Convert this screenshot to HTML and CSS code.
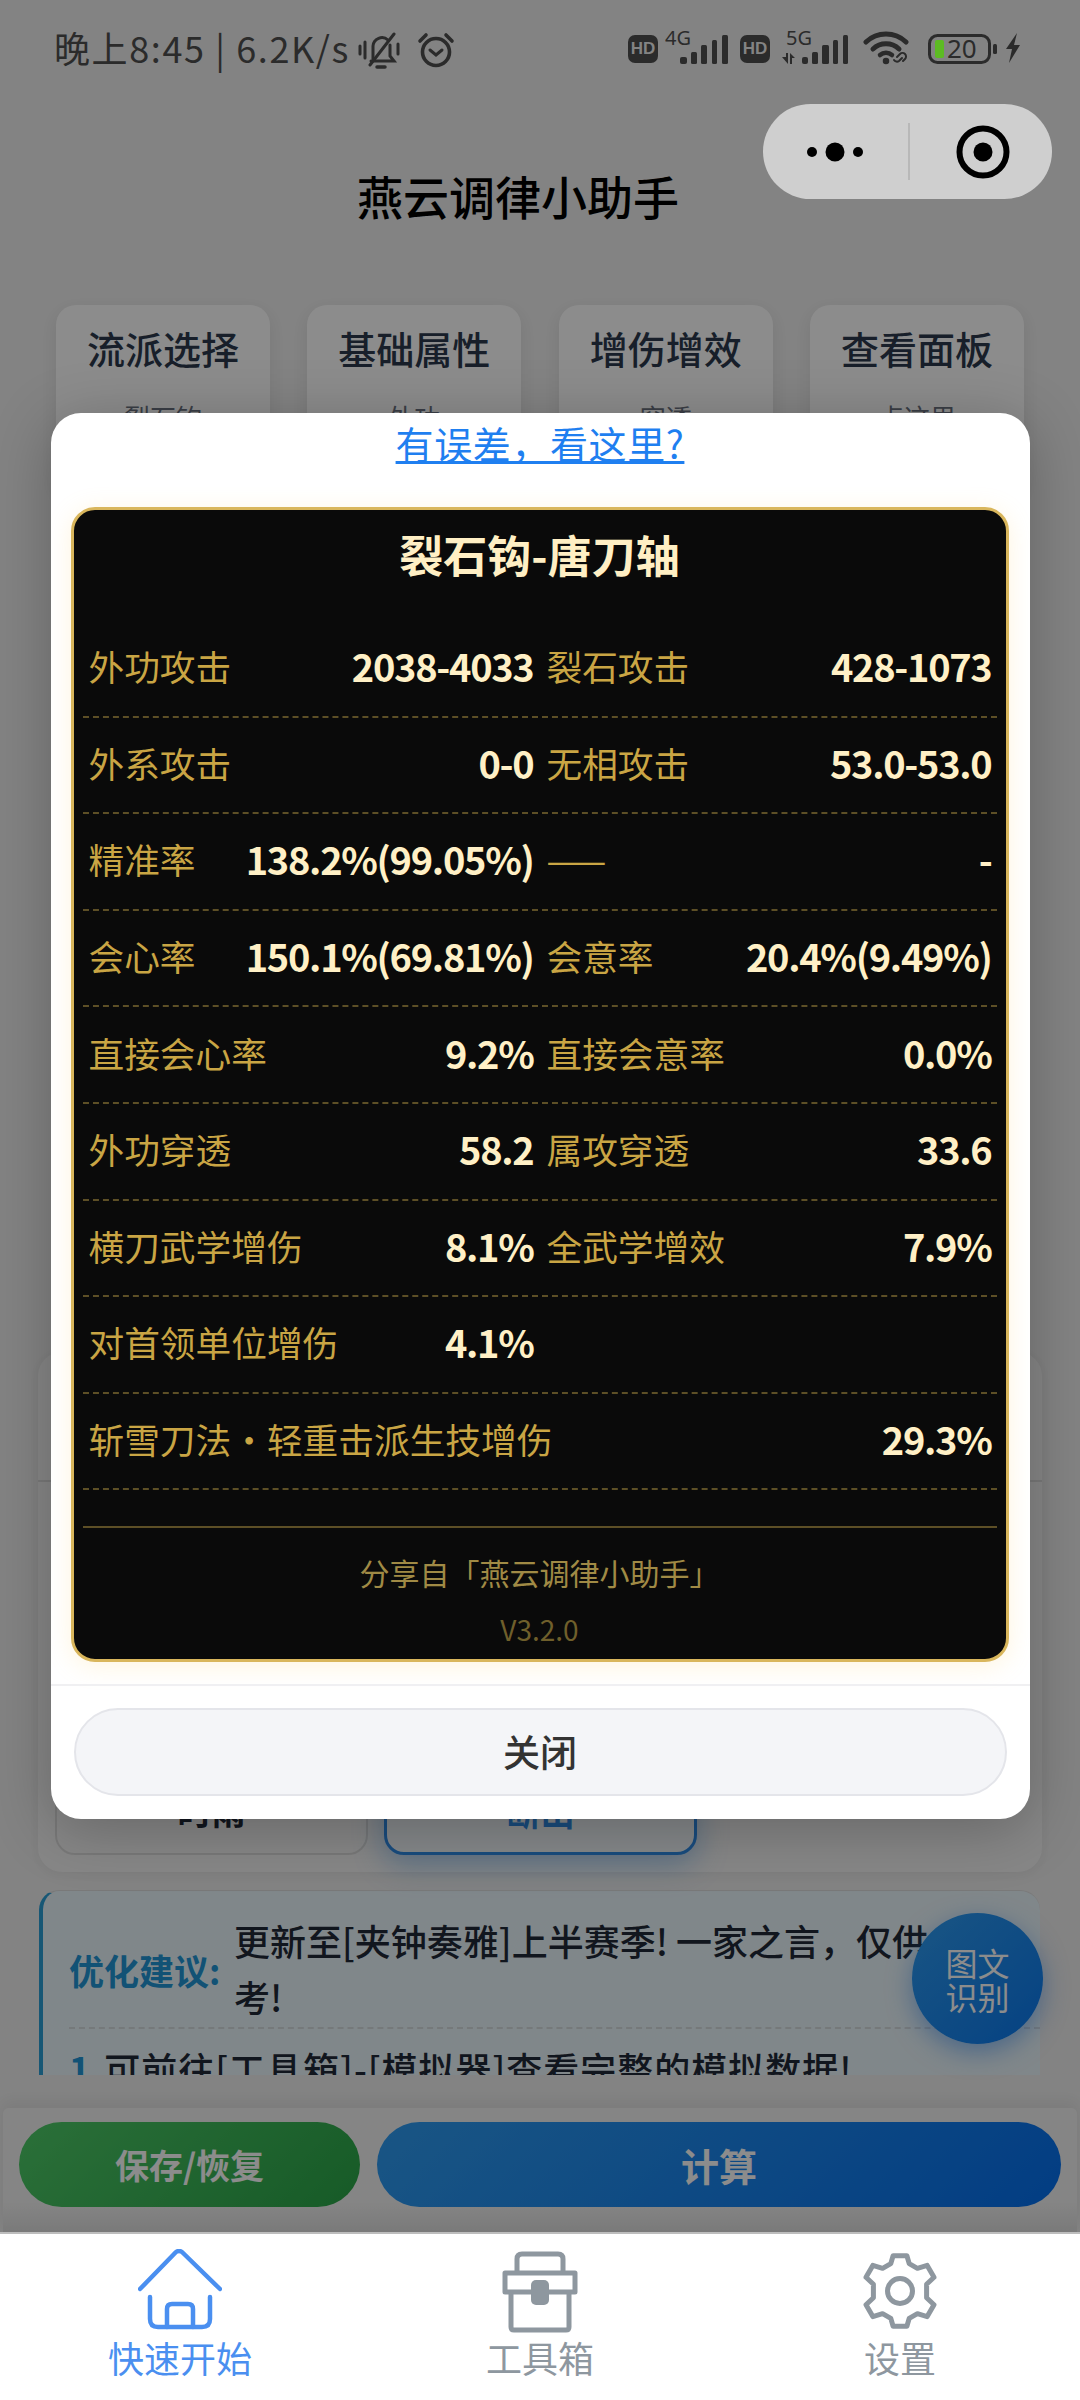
FILE: index.html
```html
<!DOCTYPE html>
<html lang="zh-CN">
<head>
<meta charset="utf-8">
<title>燕云调律小助手</title>
<link rel="stylesheet" href="styles.css">
</head>
<body>
<div class="screen">
  <div class="page">
    <div class="status">
      <div class="status-left">
        <span class="status-text">晚上8:45 | 6.2K/s</span>
        <svg class="ic-bell" viewBox="0 0 44 38" width="44" height="38"><g fill="none" stroke="#2b2b2b" stroke-width="3" stroke-linecap="round"><path d="M2 14v8M7 10v16"/><path d="M15 27V14a9 9 0 0 1 15-6"/><path d="M32 13v11l4 5H13"/><path d="M19 35h8" stroke-width="3.5"/><path d="M36 2 12 33"/><path d="M40 12v10"/></g></svg>
        <svg class="ic-alarm" viewBox="0 0 38 36" width="38" height="36"><g fill="none" stroke="#2b2b2b" stroke-width="3.6" stroke-linecap="round"><circle cx="19" cy="20" r="13.5"/><path d="M3 9l6-6M35 9l-6-6"/><path d="M13 18l6 5 6-5" stroke-width="3"/></g></svg>
      </div>
      <div class="status-right">
        <span class="hd">HD</span>
        <svg class="ic-sig4" viewBox="0 0 63 36" width="63" height="36"><text x="0" y="15" class="sig-text">4G</text><g fill="#2b2b2b"><rect x="15" y="27" width="7" height="7" rx="2"/><rect x="26" y="22" width="6" height="12" rx="1.5"/><rect x="36" y="15" width="6" height="19" rx="1.5"/><rect x="47" y="10" width="5" height="24" rx="1.5"/><rect x="57" y="5" width="6" height="29" rx="1.5"/></g></svg>
        <span class="hd">HD</span>
        <svg class="ic-sig5" viewBox="0 0 66 36" width="66" height="36"><text x="4" y="15" class="sig-text">5G</text><g fill="#2b2b2b"><path d="M0 27h4v-4h2v11zM8 34V23l5 5h-3v6z"/><rect x="20" y="27" width="6" height="7" rx="2"/><rect x="30" y="22" width="6" height="12" rx="1.5"/><rect x="40" y="15" width="7" height="19" rx="1.5"/><rect x="51" y="10" width="5" height="24" rx="1.5"/><rect x="61" y="5" width="5" height="29" rx="1.5"/></g></svg>
        <svg class="ic-wifi" viewBox="0 0 50 36" width="50" height="36"><g fill="none" stroke="#2b2b2b" stroke-linecap="round"><path d="M3 12a29 29 0 0 1 40 0" stroke-width="5"/><path d="M10 19a19 19 0 0 1 26 0" stroke-width="5"/><path d="M17 25a9 9 0 0 1 12 0" stroke-width="4.5"/><circle cx="23" cy="31" r="2.5" fill="#2b2b2b" stroke-width="1.5"/><path d="M34 27l3-3a3.500 3.500 0 0 1 5 5l-2 2M39 28l-3 3a3.500 3.500 0 0 1-5-1" stroke-width="2"/></g></svg>
        <svg class="ic-batt" viewBox="0 0 70 30" width="70" height="30"><rect x="1.500" y="1.500" width="60" height="27" rx="8" fill="none" stroke="#2b2b2b" stroke-width="3"/><rect x="7" y="6" width="9" height="18" rx="2" fill="#5dbb23"/><text x="19" y="24" class="batt-text">20</text><rect x="65" y="10" width="4" height="10" rx="1.500" fill="#2b2b2b"/></svg>
        <svg class="ic-bolt" viewBox="0 0 16 30" width="16" height="30"><path d="M12 0 1 16h6L4 30l11-18H9z" fill="#2b2b2b"/></svg>
      </div>
    </div>

    <div class="main">
      <h1 class="app-title">燕云调律小助手</h1>
      <div class="tabs">
        <div class="tab"><div class="tab-name">流派选择</div><div class="tab-sub">裂石钧</div></div>
        <div class="tab"><div class="tab-name">基础属性</div><div class="tab-sub">外功</div></div>
        <div class="tab"><div class="tab-name">增伤增效</div><div class="tab-sub">穿透</div></div>
        <div class="tab"><div class="tab-name">查看面板</div><div class="tab-sub">点这里</div></div>
      </div>
      <div class="panel">
        <div class="panel-head"></div>
        <div class="panel-body">
          <div class="option">时雨</div>
          <div class="option is-active">断山</div>
        </div>
      </div>
      <div class="notice">
        <div class="notice-top">
          <div class="notice-label">优化建议:</div>
          <div class="notice-text">更新至[夹钟奏雅]上半赛季! 一家之言，仅供参考!</div>
        </div>
        <div class="notice-item"><span class="notice-num">1</span><span>可前往[工具箱]-[模拟器]查看完整的模拟数据!</span></div>
      </div>
    </div>

    <div class="actions">
      <div class="btn btn-save">保存/恢复</div>
      <div class="btn btn-calc">计算</div>
    </div>

    <div class="fab">图文<br>识别</div>

    <div class="overlay">
      <div class="modal">
        <a class="modal-link">有误差，看这里?</a>
        <div class="card">
          <div class="card-title">裂石钩-唐刀轴</div>
          <div class="rows">
            <div class="row"><div class="cell"><span class="k">外功攻击</span><span class="v">2038-4033</span></div><div class="cell"><span class="k">裂石攻击</span><span class="v">428-1073</span></div></div>
            <div class="row"><div class="cell"><span class="k">外系攻击</span><span class="v">0-0</span></div><div class="cell"><span class="k">无相攻击</span><span class="v">53.0-53.0</span></div></div>
            <div class="row"><div class="cell"><span class="k">精准率</span><span class="v">138.2%(99.05%)</span></div><div class="cell"><span class="k">——</span><span class="v">-</span></div></div>
            <div class="row"><div class="cell"><span class="k">会心率</span><span class="v">150.1%(69.81%)</span></div><div class="cell"><span class="k">会意率</span><span class="v">20.4%(9.49%)</span></div></div>
            <div class="row"><div class="cell"><span class="k">直接会心率</span><span class="v">9.2%</span></div><div class="cell"><span class="k">直接会意率</span><span class="v">0.0%</span></div></div>
            <div class="row"><div class="cell"><span class="k">外功穿透</span><span class="v">58.2</span></div><div class="cell"><span class="k">属攻穿透</span><span class="v">33.6</span></div></div>
            <div class="row"><div class="cell"><span class="k">横刀武学增伤</span><span class="v">8.1%</span></div><div class="cell"><span class="k">全武学增效</span><span class="v">7.9%</span></div></div>
            <div class="row"><div class="cell"><span class="k">对首领单位增伤</span><span class="v">4.1%</span></div><div class="cell"></div></div>
            <div class="row row-wide"><div class="cell"><span class="k">斩雪刀法・轻重击派生技增伤</span><span class="v">29.3%</span></div></div>
          </div>
          <div class="card-foot">
            <div class="share">分享自「燕云调律小助手」</div>
            <div class="version">V3.2.0</div>
          </div>
        </div>
        <div class="modal-foot"><div class="close-btn">关闭</div></div>
      </div>
    </div>

    <div class="capsule">
      <svg class="cap-dots" viewBox="0 0 56 20" width="56" height="20"><g fill="#000"><circle cx="5" cy="10" r="5"/><circle cx="28" cy="10" r="9.500"/><circle cx="51" cy="10" r="5"/></g></svg>
      <span class="cap-div"></span>
      <svg class="cap-target" viewBox="0 0 54 54" width="54" height="54"><circle cx="27" cy="27" r="23.500" fill="none" stroke="#000" stroke-width="6"/><circle cx="27" cy="27" r="9.500" fill="#000"/></svg>
    </div>
  </div>

  <nav class="tabbar">
    <div class="nav-item is-on">
      <svg class="nav-ic" viewBox="0 0 84 84" width="84" height="84"><g fill="none" stroke="#4a8ff0" stroke-width="4.500" stroke-linecap="round" stroke-linejoin="round"><path d="M2 40 38 3q3-2 6 0l38 37"/><path d="M12 48v22q0 8 8 8h44q8 0 8-8V48"/><path d="M29 78V60q0-5 5-5h16q5 0 5 5v18"/></g></svg>
      <span class="nav-label">快速开始</span>
    </div>
    <div class="nav-item">
      <svg class="nav-ic" viewBox="0 0 84 84" width="84" height="84"><g fill="none" stroke="#8e979f" stroke-width="5" stroke-linejoin="round"><path d="M19 24V10q0-5 5-5h36q5 0 5 5v14"/><path d="M7 24h70v19H7z"/><path d="M13 43v35q0 3 3 3h52q3 0 3-3V43"/></g><rect x="33" y="31" width="18" height="25" rx="5" fill="#8e979f"/></svg>
      <span class="nav-label">工具箱</span>
    </div>
    <div class="nav-item">
      <svg class="nav-ic" viewBox="0 0 84 84" width="84" height="84"><g fill="none" stroke="#8e979f" stroke-width="5" stroke-linejoin="round"><path d="M32.800 14.600 35.100 6.700H48.900L51.200 14.600 59.400 19.300 69.200 16.400 76 28.300 68.600 35.300V48.700L76 55.700 69.200 67.600 59.400 64.700 51.200 69.400 48.900 77.300H35.100L32.800 69.400 24.600 64.700 14.800 67.600 8 55.700 15.400 48.700V35.300L8 28.300 14.800 16.400 24.600 19.300z"/><circle cx="42" cy="42" r="12.500"/></g></svg>
      <span class="nav-label">设置</span>
    </div>
  </nav>
</div>
</body>
</html>
```
FILE: styles.css
```css
* { box-sizing: border-box; }
html, body { margin: 0; padding: 0; }
body { font-family: "Noto Sans CJK SC", "Noto Sans", sans-serif; background: #fff; }
.screen { width: 1080px; height: 2400px; display: flex; flex-direction: column; overflow: hidden; }
.page { position: relative; height: 2232px; background: #eee; flex: none; overflow: hidden; }

/* status bar */
.status { position: relative; z-index: 3; height: 100px; display: flex; justify-content: space-between; padding: 30px 59px 0 54px; color: #2b2b2b; }
.status-left, .status-right { display: flex; align-items: flex-start; }
.status-text { font-size: 36px; line-height: 40px; letter-spacing: 1.6px; margin-top: -3px; }
.ic-bell { margin-left: 8px; margin-top: 2px; }
.ic-alarm { margin-left: 15px; margin-top: 2px; }
.hd { width: 30px; height: 28px; margin-top: 5px; border-radius: 7px; background: #2b2b2b; color: #838383; font: 700 17px/28px "Liberation Sans", sans-serif; text-align: center; }
.ic-sig4 { margin-left: 7px; }
.ic-sig4 + .hd { margin-left: 12px; }
.ic-sig5 { margin-left: 12px; }
.sig-text { font: 400 20px "Noto Sans", sans-serif; fill: #2b2b2b; }
.batt-text { font: 400 26px "Noto Sans", sans-serif; fill: #2b2b2b; }
.ic-wifi { margin-left: 15px; }
.ic-batt { margin-left: 15px; margin-top: 4px; }
.ic-bolt { margin-left: 7px; margin-top: 3px; }

/* page content under the mask */
.main { height: 1975px; overflow: hidden; }
.app-title { margin: 0 44px 0 0; height: 196px; padding-bottom: 6px; display: flex; align-items: center; justify-content: center; font-size: 46px; font-weight: 500; color: #000; }
.tabs { margin: 9px 56px 0; display: flex; justify-content: space-between; }
.tab { width: 214px; height: 190px; border-radius: 20px; background: #fff; box-shadow: 0 6px 16px rgba(0,0,0,.08); text-align: center; padding-top: 16px; }
.tab-name { font-size: 38px; line-height: 54px; font-weight: 500; color: #2c3a4d; }
.tab-sub { margin-top: 24px; font-size: 26px; line-height: 36px; color: #6b7280; }
.panel { margin: 857px 38px 0; background: #f6f6f6; border-radius: 24px; box-shadow: 0 2px 10px rgba(0,0,0,.05); padding-bottom: 17px; }
.panel-head { height: 130px; border-bottom: 2px solid #ddd; }
.panel-body { margin-top: 263px; padding: 0 17px; display: flex; gap: 16px; }
.option { width: 313px; height: 110px; padding-top: 46px; border: 2px solid #ddd; border-radius: 20px; text-align: center; font-size: 34px; font-weight: 700; line-height: 36px; color: #1f2937; background: #f6f6f6; }
.option.is-active { border: 3px solid #2f8be6; color: #2f8be6; box-shadow: 0 10px 30px rgba(47,139,230,.4); background: #f2f7fc; }
.notice { margin: 18px 40px 0 39px; height: 320px; background: #eaf6fb; border-left: 4px solid #2a9fd6; border-radius: 20px 20px 0 0; padding: 20px 0 0 26px; border-top: 1px solid #ddd; }
.notice-top { display: flex; align-items: center; height: 118px; border-bottom: 2px dashed #d6dcdf; }
.notice-label { width: 165px; flex: none; font-size: 35px; font-weight: 700; color: #2296d6; }
.notice-text { width: 745px; font-size: 36px; line-height: 56px; font-weight: 500; color: #1f2937; margin-top: -2px; }
.notice-item { margin-top: 14px; display: flex; gap: 13px; font-size: 36px; letter-spacing: 1px; line-height: 50px; font-weight: 500; color: #1f2937; }
.notice-num { color: #2296d6; font-weight: 700; }
.actions { margin: 33px 3px 0; height: 124px; padding: 14px 16px 25px; display: flex; gap: 17px; background: linear-gradient(#f3f3f3 75%, #dedede); border-radius: 6px 6px 0 0; box-shadow: 0 -6px 14px rgba(0,0,0,.06); }
.btn { height: 85px; border-radius: 43px; display: flex; align-items: center; justify-content: center; color: #fff; font-weight: 700; }
.btn-save { width: 341px; flex: none; font-size: 34px; background: linear-gradient(135deg, #4ecb68, #2aa548); }
.btn-calc { flex: 1; font-size: 38px; background: linear-gradient(135deg, #2f9cf0, #0570ee); }
.fab { position: absolute; left: 912px; top: 1913px; width: 131px; height: 131px; border-radius: 50%; display: flex; align-items: center; justify-content: center; text-align: center; font-size: 32px; line-height: 34px; color: #fff; background: linear-gradient(135deg, #2f9cf0, #0a78ee); box-shadow: 0 8px 24px rgba(40,130,240,.5); }

/* mask and dialog */
.overlay { position: absolute; inset: 0; z-index: 2; background: rgba(0,0,0,.45); display: flex; align-items: center; justify-content: center; }
.modal { width: 979px; height: 1406px; background: #fff; border-radius: 30px; box-shadow: 0 10px 60px rgba(0,0,0,.25); overflow: hidden; display: flex; flex-direction: column; }
.modal-link { display: block; text-align: center; font-size: 38px; letter-spacing: .6px; line-height: 60px; color: #1f7ff0; text-decoration: underline; }
.card { margin: 34px 21px 0 20px; height: 1155px; flex: none; background: #0a0a0a; border: 3px solid #d9b65c; border-radius: 24px; padding: 14px 9px 0; box-shadow: 0 4px 24px rgba(255,210,110,.22); }
.card-title { text-align: center; font-size: 44px; line-height: 60px; font-weight: 700; color: #ffefc4; }
.rows { margin-top: 37px; }
.row { height: 96.6px; border-bottom: 2px dashed #5d4f26; padding: 0 6px; display: grid; grid-template-columns: 1fr 1fr; column-gap: 14px; }
.row-wide { grid-template-columns: 1fr; }
.cell { display: flex; align-items: center; justify-content: space-between; padding-bottom: 5px; }
.k { font-size: 35.700px; color: #c9a544; white-space: nowrap; }
.v { font-size: 38px; font-weight: 700; color: #fff0c6; white-space: nowrap; letter-spacing: -1.300px; margin-right: -1px; }
.card-foot { margin-top: 36px; border-top: 2px solid #5d4f26; padding-top: 24px; text-align: center; }
.share { font-size: 30px; line-height: 40px; color: #a08a45; }
.version { margin-top: 17px; font-size: 28px; line-height: 40px; color: #6f5f2b; }
.modal-foot { margin-top: 22px; border-top: 2px solid #f0f0f2; padding: 22px 23px 0; }
.close-btn { height: 88px; padding-bottom: 2px; border-radius: 44px; background: #f4f5f8; border: 2px solid #e4e5ea; display: flex; align-items: center; justify-content: center; font-size: 37px; font-weight: 500; color: #333; }

/* mini-program capsule */
.capsule { position: absolute; z-index: 3; left: 763px; top: 104px; width: 289px; height: 95px; border-radius: 48px; background: #cfcfcf; display: flex; align-items: center; }
.cap-dots { margin-left: 44px; }
.cap-div { margin-left: 45px; width: 2px; height: 57px; background: #b8b8b8; }
.cap-target { margin-left: 46px; }

/* tab bar */
.tabbar { flex: 1; background: #fff; border-top: 2px solid #bdbdbd; display: grid; grid-template-columns: repeat(3, 1fr); padding-top: 15px; }
.nav-item { display: flex; flex-direction: column; align-items: center; color: #8e979f; }
.nav-item.is-on { color: #4a8ff0; }
.nav-ic { display: block; }
.nav-label { font-size: 36px; line-height: 50px; margin-top: -1px; }
```
